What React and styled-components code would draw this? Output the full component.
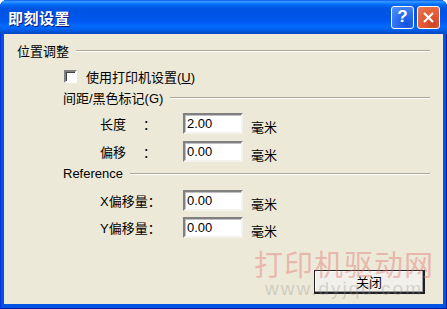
import React from 'react';
import styled, { createGlobalStyle } from 'styled-components';

const Global = createGlobalStyle`
  html, body { margin: 0; padding: 0; background: #fff; }
  body { font-family: "Liberation Sans", "Noto Sans CJK SC", sans-serif; }
`;

const Window = styled.div`
  position: relative;
  width: 447px;
  height: 309px;
  display: flex;
  flex-direction: column;
  background: #0054e3;
  border-radius: 7px 7px 0 0;
  box-shadow: inset 1px 0 0 #0831d9, inset -1px 0 0 #001ea0, inset 0 -1px 0 #001ea0;
  overflow: hidden;
`;

const TitleBar = styled.div`
  height: 34px;
  flex: none;
  display: flex;
  align-items: center;
  padding: 0 7px 0 8px;
  background: linear-gradient(to bottom, #0058ee 0%, #3593ff 4%, #288eff 7%, #127dff 10%, #036ffc 13%, #0262ee 18%, #0057e5 24%, #0054e3 30%, #0055eb 56%, #005bf5 66%, #026afe 76%, #0062ef 86%, #0052d6 94%, #0046c0 100%);
`;

const Title = styled.div`
  flex: 1;
  color: #fff;
  font-family: "Noto Sans CJK SC", sans-serif;
  font-weight: 700;
  font-size: 15px;
  letter-spacing: 0.5px;
  text-shadow: 1px 1px 0 #0a1883;
`;

const CapButton = styled.div`
  width: 21px;
  height: 21px;
  margin-left: ${p => (p.$gap ? '3px' : '0')};
  border: 1px solid #fff;
  border-radius: 3px;
  display: flex;
  align-items: center;
  justify-content: center;
  color: #fff;
  font: 700 17px "Liberation Sans", sans-serif;
  background: ${p =>
    p.$red
      ? 'radial-gradient(circle at 70% 80%, #cc4626 0%, #e35a32 45%, #ea7a55 100%)'
      : 'radial-gradient(circle at 70% 80%, #1454d8 0%, #2a6bf0 45%, #5b95f8 100%)'};
`;

const Client = styled.div`
  flex: 1;
  margin: 0 4px 5px 4px;
  background: #ece9d8;
  padding: 8px 13px 0 13px;
  display: flex;
  flex-direction: column;
  color: #000;
  font-size: 13px;
`;

const Header = styled.div`
  display: flex;
  align-items: center;
  height: 16px;
  white-space: nowrap;
  margin-top: ${p => p.$top || 0}px;
  padding-left: ${p => p.$indent || 0}px;
  &::after {
    content: '';
    flex: 1;
    margin-left: 7px;
    height: 1px;
    background: #aca899;
    box-shadow: 0 1px 0 #fff;
  }
`;

const CheckRow = styled.label`
  display: flex;
  align-items: center;
  height: 16px;
  margin-top: 10px;
  padding-left: 47px;
  gap: 9px;
`;

const Box = styled.span`
  width: 9px;
  height: 9px;
  background: #fff;
  border-top: 2px solid #808080;
  border-left: 2px solid #808080;
  border-right: 2px solid #fff;
  border-bottom: 2px solid #fff;
  box-shadow: inset 1px 1px 0 #404040;
`;

const Field = styled.div`
  display: flex;
  align-items: center;
  height: 21px;
  margin-top: ${p => p.$top}px;
  padding-left: 83px;
`;

const Label = styled.span`
  width: 83px;
  flex: none;
  display: flex;
  white-space: nowrap;
`;

const Name = styled.span`
  min-width: 43px;
`;

const Input = styled.div`
  height: 17px;
  width: 54px;
  background: #fff;
  border-top: 2px solid #808080;
  border-left: 2px solid #808080;
  border-right: 2px solid #f4f3ee;
  border-bottom: 2px solid #f4f3ee;
  box-shadow: inset 1px 1px 0 #c0c0c0;
  display: flex;
  align-items: center;
  padding-left: 2px;
  font-size: 13px;
`;

const Unit = styled.span`
  margin-left: 8px;
  padding-top: 5px;
`;

const Footer = styled.div`
  flex: 1;
  display: flex;
  justify-content: flex-end;
  align-items: flex-start;
  padding: 32px 5px 0 0;
`;

const Button = styled.div`
  box-sizing: border-box;
  width: 111px;
  height: 24px;
  border: 1px solid #202020;
  border-right-width: 2px;
  border-bottom-width: 2px;
  display: flex;
  align-items: center;
  justify-content: center;
  background: #f1f0ea;
  box-shadow: inset -1px -1px 0 #9a9a9a, inset 1px 1px 0 #fff;
`;

const Watermark = styled.div`
  position: absolute;
  left: 250px;
  top: 246px;
  width: 188px;
  pointer-events: none;
  white-space: nowrap;
  display: flex;
  flex-direction: column;
  align-items: center;
`;

const MarkCn = styled.div`
  font-family: "Noto Sans CJK SC", sans-serif;
  font-size: 29px;
  line-height: 34px;
  letter-spacing: 1px;
  color: rgba(226, 110, 110, 0.42);
`;

const MarkEn = styled.div`
  font-family: "Liberation Sans", sans-serif;
  font-size: 19px;
  line-height: 18px;
  letter-spacing: 2px;
  color: rgba(150, 150, 150, 0.35);
`;

const fields = [
  { name: '长度', value: '2.00', top: 8 },
  { name: '偏移', value: '0.00', top: 7 },
];

const offsets = [
  { name: 'X偏移量', value: '0.00', top: 9 },
  { name: 'Y偏移量', value: '0.00', top: 6 },
];

const Row = ({ f }) => (
  <Field $top={f.top}>
    <Label>
      <Name>{f.name}</Name>
      <span>：</span>
    </Label>
    <Input>{f.value}</Input>
    <Unit>毫米</Unit>
  </Field>
);

export default function App() {
  return (
    <>
      <Global />
      <Window>
        <TitleBar>
          <Title>即刻设置</Title>
          <CapButton>?</CapButton>
          <CapButton $red $gap>
            <svg width="13" height="13" viewBox="0 0 13 13">
              <path d="M2 2 L11 11 M11 2 L2 11" stroke="#fff" strokeWidth="2.2" />
            </svg>
          </CapButton>
        </TitleBar>
        <Client>
          <Header>位置调整</Header>
          <CheckRow>
            <Box />
            <span>使用打印机设置(<u>U</u>)</span>
          </CheckRow>
          <Header $indent={46} $top={5}>间距/黑色标记(G)</Header>
          {fields.map(f => <Row key={f.name} f={f} />)}
          <Header $indent={46} $top={3}>Reference</Header>
          {offsets.map(f => <Row key={f.name} f={f} />)}
          <Footer>
            <Button>关闭</Button>
          </Footer>
        </Client>
        <Watermark>
          <MarkCn>打印机驱动网</MarkCn>
          <MarkEn>www.dyjqd.com</MarkEn>
        </Watermark>
      </Window>
    </>
  );
}
